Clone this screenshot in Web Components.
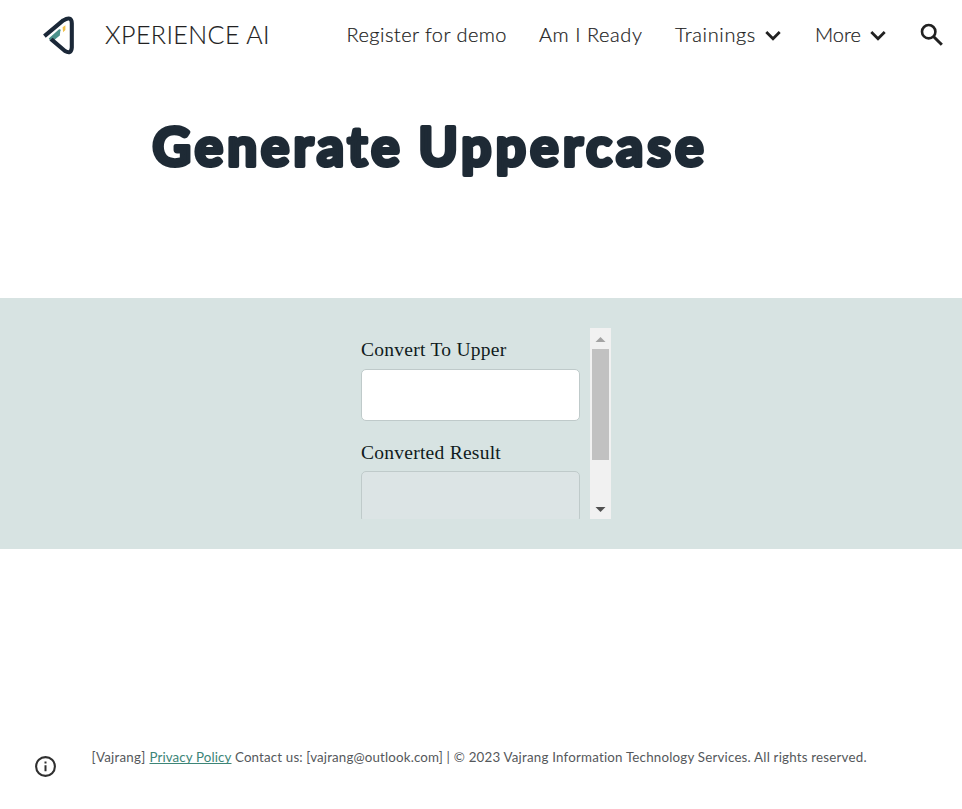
<!DOCTYPE html>
<html lang="en"><head><meta charset="utf-8"><title>Generate Uppercase</title>
<style>
html,body{margin:0;height:100%;overflow:hidden;background:#fff}
body{font-family:Lato,"Noto Sans",sans-serif;color:#212121}
</style></head><body>
<app-page></app-page>
<script>
const define=(name,html,setup)=>customElements.define(name,class extends HTMLElement{
  connectedCallback(){
    if(this.shadowRoot)return;
    const t=document.createElement('template');t.innerHTML=html;
    this.attachShadow({mode:'open'}).append(t.content.cloneNode(true));
    if(setup)setup(this);
  }
});
/* Text run whose tracking is adjusted to span a given width. */
define('fit-text',`<style>:host{display:inline-block;white-space:pre;flex:none}span{display:inline-block}:host([underline]) span{text-decoration:underline;text-underline-offset:1px;text-decoration-skip-ink:none}</style><span><slot></slot></span>`,el=>{
  const s=el.shadowRoot.querySelector('span'),w=+el.getAttribute('width');
  const n=el.textContent.length;
  s.style.letterSpacing=(w-s.getBoundingClientRect().width)/n+'px';
  el.style.width=w+'px';
});
define('brand-logo',`<style>:host{display:block;width:46px;height:50px;flex:none}svg{display:block}</style>
<svg width="46" height="50" viewBox="0 0 46 50" fill="none">
<path d="M13.2 29.2 24.5 19 23.8 25.6 17 31Z" fill="#4b918b"/>
<path d="M8.4 26.1 27.2 10.4Q35.6 5.4 35.8 13.2V37.5Q35.2 44.6 29 41L14.8 28.9" stroke="#1b2838" stroke-width="4.1" stroke-linejoin="round"/>
<path d="M13.4 29.2 24 19.8" stroke="#4b918b" stroke-width="2"/>
<path d="M26.6 17.2 29.4 15.2V20L27.1 22.3Z" fill="#f2c14a"/></svg>`);
define('nav-item',`<style>:host{display:flex;align-items:center;font-size:20px;line-height:30px;font-weight:300;color:#212121;-webkit-text-stroke:.2px}svg{display:none;margin-left:8.5px;margin-top:4px}:host([menu]) svg{display:block}</style>
<slot></slot><svg width="16" height="12" viewBox="0 0 16 12" fill="none" stroke="#212121" stroke-width="2.8"><path d="M1.3 2.1 8 8.8 14.7 2.1"/></svg>`);
define('site-header',`<style>
:host{display:flex;height:70px;padding-left:36px;box-sizing:border-box}
brand-logo{margin-top:10px}
.title{font-size:25px;line-height:30px;font-weight:300;margin:19px 0 0 23px;-webkit-text-stroke:.15px}
nav{display:flex;margin:19px 0 0 76.5px;height:30px}
.a{margin-right:32px}.b{margin-right:32.5px}.c{margin-right:34.5px}
.search{margin:23px 0 0 34.5px;flex:none}
</style><brand-logo></brand-logo><fit-text class="title" width="165">XPERIENCE AI</fit-text>
<nav><nav-item class="a"><fit-text width="160.5">Register for demo</fit-text></nav-item><nav-item class="b"><fit-text width="103.5">Am I Ready</fit-text></nav-item><nav-item class="c" menu><fit-text width="81">Trainings</fit-text></nav-item><nav-item menu><fit-text width="46">More</fit-text></nav-item></nav>
<svg class="search" width="24" height="24" viewBox="0 0 24 24" fill="none" stroke="#212121"><circle cx="8.7" cy="8.7" r="6.7" stroke-width="2.6"/><path d="M13.5 13.5 21.8 21.8" stroke-width="3"/></svg>`);
define('page-hero',`<style>:host{display:block;height:228px}svg{display:block;overflow:visible}text{font:700 53px Lato,"Noto Sans",sans-serif;fill:#1e2a35;stroke:#1e2a35;stroke-width:4.2px;stroke-linejoin:round}</style>
<svg role="heading" width="962" height="228"><text x="152.5" y="96" textLength="247" lengthAdjust="spacing">Generate</text><text x="418.5" y="96" textLength="285" lengthAdjust="spacing">Uppercase</text></svg>`);
define('labeled-field',`<style>:host{display:block;color:#101b20;font:19.5px/24px "Liberation Serif",serif}label{display:block;height:31px}div{box-sizing:border-box;width:219px;height:52px;border:1px solid #bfcaca;border-radius:5px;background:#fff}:host([readonly]) div{background:#dce4e5}:host([readonly]) label{height:30px;padding-top:1px}</style><label><slot></slot></label><div></div>`);
define('scroll-track',`<style>:host{display:flex;flex-direction:column;align-items:center;width:21px;height:191px;background:#f1f1f1;flex:none}.thumb{width:17px;height:111px;background:#c1c1c1}svg{display:block;flex:none}.gap{flex:1}</style>
<svg width="21" height="21"><path d="M5.5 14 10.5 9 15.5 14Z" fill="#a3a3a3"/></svg><div class="thumb"></div><div class="gap"></div><svg width="21" height="21"><path d="M5.5 9 10.5 14 15.5 9Z" fill="#505050"/></svg>`);
define('converter-panel',`<style>:host{display:flex;justify-content:center;height:251px;box-sizing:border-box;padding-top:30px;background:#d7e3e2}.frame{display:flex;justify-content:space-between;width:250px;height:191px;overflow:hidden}.form{padding-top:10px}.second{margin-top:19px}.form{height:181px;overflow:hidden}.frame{margin-left:10px}</style>
<div class="frame"><div class="form"><labeled-field><fit-text width="145.5">Convert To Upper</fit-text></labeled-field><labeled-field class="second" readonly><fit-text width="140">Converted Result</fit-text></labeled-field></div><scroll-track></scroll-track></div>`);
define('site-footer',`<style>:host{display:flex;padding-left:34px;margin-top:198px;color:#55585b}.info{margin-top:8px;flex:none}p{display:flex;margin:0 0 0 34.5px;font-size:13.33px;line-height:20px;white-space:pre}.l{margin:0 3.5px 0 4px;color:#3d8577}</style>
<svg class="info" width="23" height="22" viewBox="0 0 23 22"><circle cx="11.5" cy="11.5" r="9.4" fill="none" stroke="#303030" stroke-width="2.1"/><path d="M10.5 10.2h2v6h-2zM10.5 6.5h2v2h-2z" fill="#303030"/></svg>
<p><fit-text width="54">[Vajrang]</fit-text><fit-text class="l" underline width="82">Privacy Policy</fit-text><fit-text width="208">Contact us: [vajrang@outlook.com]</fit-text><fit-text width="424"> | © 2023 Vajrang Information Technology Services. All rights reserved.</fit-text></p>`);
define('app-page',`<style>:host{display:block;width:962px;height:809px}</style><site-header></site-header><page-hero></page-hero><converter-panel></converter-panel><site-footer></site-footer>`);
</script></body></html>
